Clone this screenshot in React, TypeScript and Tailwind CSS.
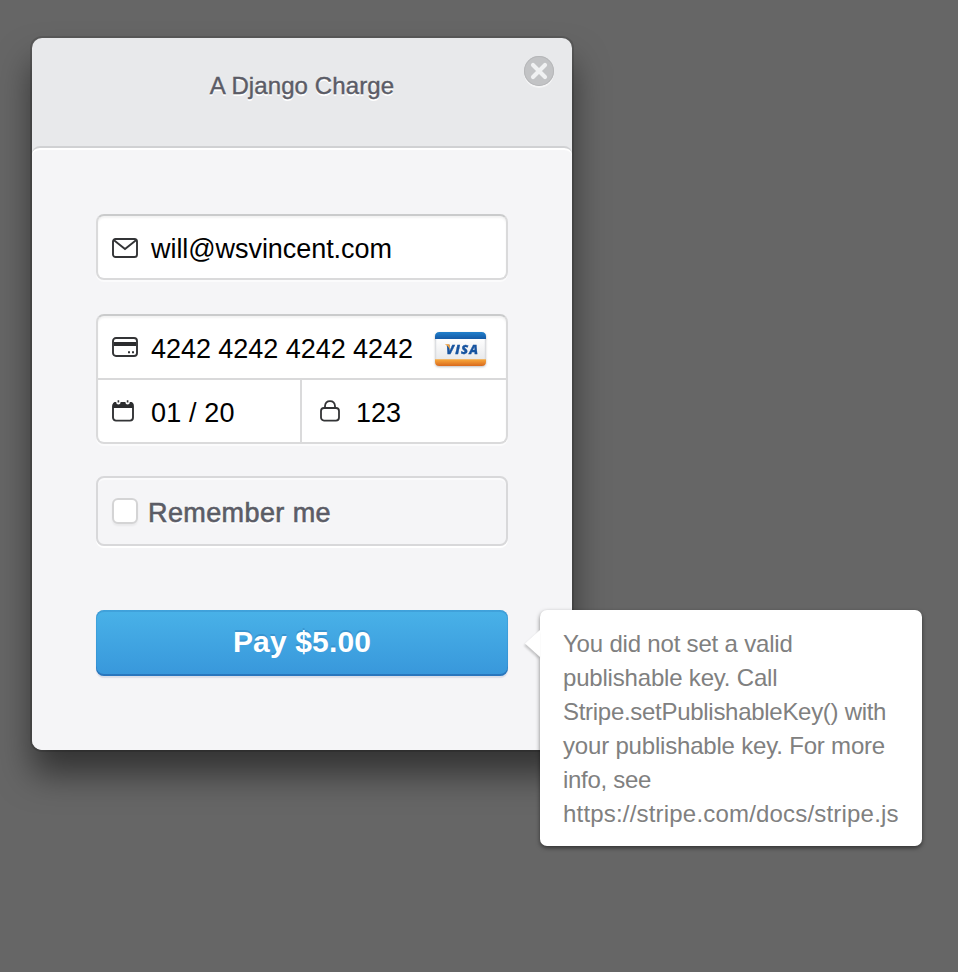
import React from "react";

const ICON = "shrink-0 overflow-visible";

function MailIcon() {
  return (
    <svg className={ICON + " relative top-px"} width="26" height="20" viewBox="0 0 26 20" fill="none" stroke="#333436" strokeWidth="1.9">
      <rect x="1" y="1" width="24" height="18" rx="2.6" />
      <path d="M2 2.2 L13 11 L24 2.2" />
    </svg>
  );
}

function CardIcon() {
  return (
    <svg className={ICON} width="26" height="20" viewBox="0 0 26 20" fill="none">
      <rect x="1" y="1" width="24" height="18" rx="3" stroke="#333436" strokeWidth="1.9" />
      <path d="M2 5H24V9H2Z" fill="#2b2c2e" />
      <path d="M16 14.200h2v2h-2zM20 14.200h2v2h-2z" fill="#333436" />
    </svg>
  );
}

function CalendarIcon() {
  return (
    <svg className={ICON} width="22" height="22" viewBox="0 0 22 22" fill="none">
      <rect x="1" y="3" width="20" height="17.6" rx="3" stroke="#333436" strokeWidth="1.9" />
      <path d="M1 8V5Q1 2 3.500 2H18.500Q21 2 21 5V8Z" fill="#2b2c2e" />
      <path d="M4.200 0h4.400v2.200a2.200 2.200 0 0 1-4.400 0zM13.400 0h4.400v2.200a2.200 2.200 0 0 1-4.400 0z" fill="#fff" />
      <path d="M5.600 .3h1.600v2.200H5.600zM14.800 .3h1.600v2.200h-1.600z" fill="#333436" />
    </svg>
  );
}

function LockIcon() {
  return (
    <svg className={ICON} width="20" height="22" viewBox="0 0 20 22" fill="none" stroke="#333436" strokeWidth="1.8">
      <rect x="1" y="8" width="18" height="12.6" rx="3" />
      <path d="M5 8V6Q5.4 1.2 10 1.2T15 6V8" />
    </svg>
  );
}

function VisaCard() {
  return (
    <svg className="shrink-0 overflow-visible drop-shadow-[0_1px_1px_rgba(0,0,0,0.25)]" width="51" height="34" viewBox="0 0 51 34">
      <defs>
        <linearGradient id="visaBlue" x1="0" y1="0" x2="0" y2="1">
          <stop offset="0" stopColor="#2180cc" />
          <stop offset="1" stopColor="#1459a5" />
        </linearGradient>
        <linearGradient id="visaBody" x1="0" y1="0" x2="0" y2="1">
          <stop offset="0" stopColor="#ffffff" />
          <stop offset="1" stopColor="#e8e9eb" />
        </linearGradient>
        <linearGradient id="visaOrange" x1="0" y1="0" x2="0" y2="1">
          <stop offset="0" stopColor="#f9aa3d" />
          <stop offset="1" stopColor="#d9691c" />
        </linearGradient>
      </defs>
      <path d="M.8 6H50.200V28H.8Z" fill="url(#visaBody)" stroke="#d5d8df" strokeWidth=".7" />
      <path d="M0 7V4.500Q0 0 4.500 0H46.500Q51 0 51 4.500V7Z" fill="url(#visaBlue)" />
      <path d="M0 27.300H51V29.500Q51 34 46.500 34H4.500Q0 34 0 29.500Z" fill="url(#visaOrange)" />
      <text x="11" y="21.800" fill="#1754a0" stroke="#1754a0" strokeWidth=".3" fontFamily="Open Sans, sans-serif" fontWeight="800" fontStyle="italic" fontSize="13" textLength="32">VISA</text>
      <path d="M9.800 12.300H14.400L15.200 17.500Q13.500 13.800 9.800 12.300Z" fill="#f4a340" />
    </svg>
  );
}

export default function App() {
  return (
    <div className="relative h-[972px] w-[958px] overflow-hidden bg-[#666666] pl-8 pt-[38px] font-['Liberation_Sans',Arial,sans-serif]">
      <main className="flex h-[712px] w-[540px] flex-col rounded-[10px] bg-[#e8e9eb] shadow-[0_0_0_2px_rgba(0,0,0,0.12),0_24px_34px_rgba(0,0,0,0.5)]">
        <header className="relative h-[108px] shrink-0 pt-[34px] text-center">
          <h1 className="text-[24px] leading-[28px] tracking-[0.1px] text-[#5b5c66] [-webkit-text-stroke:0.4px_#5b5c66] [text-shadow:0_2px_0_#ffffff]">A Django Charge</h1>
          <button aria-label="Close" className="absolute right-[18px] top-[18px] flex size-[30px] items-center justify-center rounded-full bg-[#c2c3c5] shadow-[inset_0_0_0_1px_#b6b7b9,0_2px_0_rgba(255,255,255,0.55)]">
            <svg width="30" height="30" viewBox="0 0 30 30" stroke="#f0f1f2" strokeWidth="4.2" strokeLinecap="round"><path d="M9 9L21 21M21 9L9 21" /></svg>
          </button>
        </header>
        <form className="flex grow flex-col rounded-b-[10px] rounded-t-[8px] border-t-2 border-[#d0d1d3] bg-[#f5f5f7] px-16 pt-[66px] shadow-[inset_0_2px_0_#ffffff]">
          <div className="flex h-[66px] shrink-0 items-center rounded-[8px] border-2 border-[#dadadb] border-t-[#cacbcc] bg-white pl-[14px] shadow-[0_2px_0_#fbfbfc,inset_0_2px_2px_rgba(0,0,0,0.05)]">
            <MailIcon />
            <span className="ml-[13px] pt-[3px] text-[27px] leading-8 tracking-[-0.06px] text-black">will@wsvincent.com</span>
          </div>
          <div className="mt-[34px] h-[130px] shrink-0 rounded-[8px] border-2 border-[#dadadb] border-t-[#cacbcc] bg-white shadow-[0_2px_0_#fbfbfc,inset_0_2px_2px_rgba(0,0,0,0.05)]">
            <div className="flex h-[64px] items-center border-b-2 border-[#d9d9da] pl-[14px]">
              <CardIcon />
              <span className="ml-[13px] pt-[3px] text-[27px] leading-8 tracking-[-0.04px] text-black">4242 4242 4242 4242</span>
              <span className="ml-auto mr-[20px] pt-[3px]"><VisaCard /></span>
            </div>
            <div className="flex h-[62px]">
              <div className="flex w-[204px] items-center border-r-2 border-[#dadadb] pl-[14px]">
                <CalendarIcon />
                <span className="ml-[17px] pt-[3px] text-[27px] leading-8 tracking-[0.15px] text-black">01 / 20</span>
              </div>
              <div className="flex items-center pl-[18px]">
                <LockIcon />
                <span className="ml-[16px] pt-[3px] text-[27px] leading-8 text-black">123</span>
              </div>
            </div>
          </div>
          <div className="mt-8 flex h-[70px] shrink-0 items-center rounded-[8px] border-2 border-[#d8d8da] pl-[14px] shadow-[0_2px_0_#ffffff,inset_0_2px_0_#fbfbfc]">
            <span className="size-[26px] rounded-[6px] border-2 border-[#d4d4d5] bg-white shadow-[0_2px_2px_rgba(0,0,0,0.05)]" />
            <span className="ml-[10px] pt-[3px] text-[27px] leading-8 tracking-[0.4px] text-[#5b5c66] [-webkit-text-stroke:0.6px_#5b5c66] [text-shadow:0_2px_0_#ffffff]">Remember me</span>
          </div>
          <button type="button" className="mt-16 h-[66px] shrink-0 rounded-[8px] bg-linear-to-b from-[#49b2e8] to-[#3897db] pb-[3px] text-[30px] font-bold tracking-[0.15px] text-white shadow-[inset_0_2px_0_rgba(30,100,170,0.2),inset_0_-2px_0_rgba(20,70,145,0.4),inset_1px_0_0_rgba(30,100,170,0.15),inset_-1px_0_0_rgba(30,100,170,0.15),0_2px_1px_rgba(30,60,130,0.12)] [text-shadow:0_-2px_0_rgba(30,100,160,0.3)]">Pay $5.00</button>
        </form>
      </main>
      <aside className="absolute left-[540px] top-[610px] h-[236px] w-[382px] rounded-[7px] bg-white px-[23px] pt-[17px] text-[24px] leading-[34px] text-[#808080] shadow-[0_2px_4px_rgba(0,0,0,0.5)]">
        <svg className="absolute -left-[15px] top-[20px] overflow-visible drop-shadow-[-1px_2px_1px_rgba(0,0,0,0.2)]" width="15" height="28" viewBox="0 0 15 28"><path d="M15 0L0 13.500L15 27Z" fill="#fff" /></svg>
        <p className="relative whitespace-nowrap tracking-[-0.19px]">
          You did not set a valid<br />publishable key. Call<br /><span className="tracking-[-0.29px]">Stripe.setPublishableKey() with</span><br />your publishable key. For more<br /><span className="tracking-[-0.3px]">info, see</span><br /><span className="tracking-[0.19px]">https://stripe.com/docs/stripe.js</span>
        </p>
      </aside>
    </div>
  );
}
